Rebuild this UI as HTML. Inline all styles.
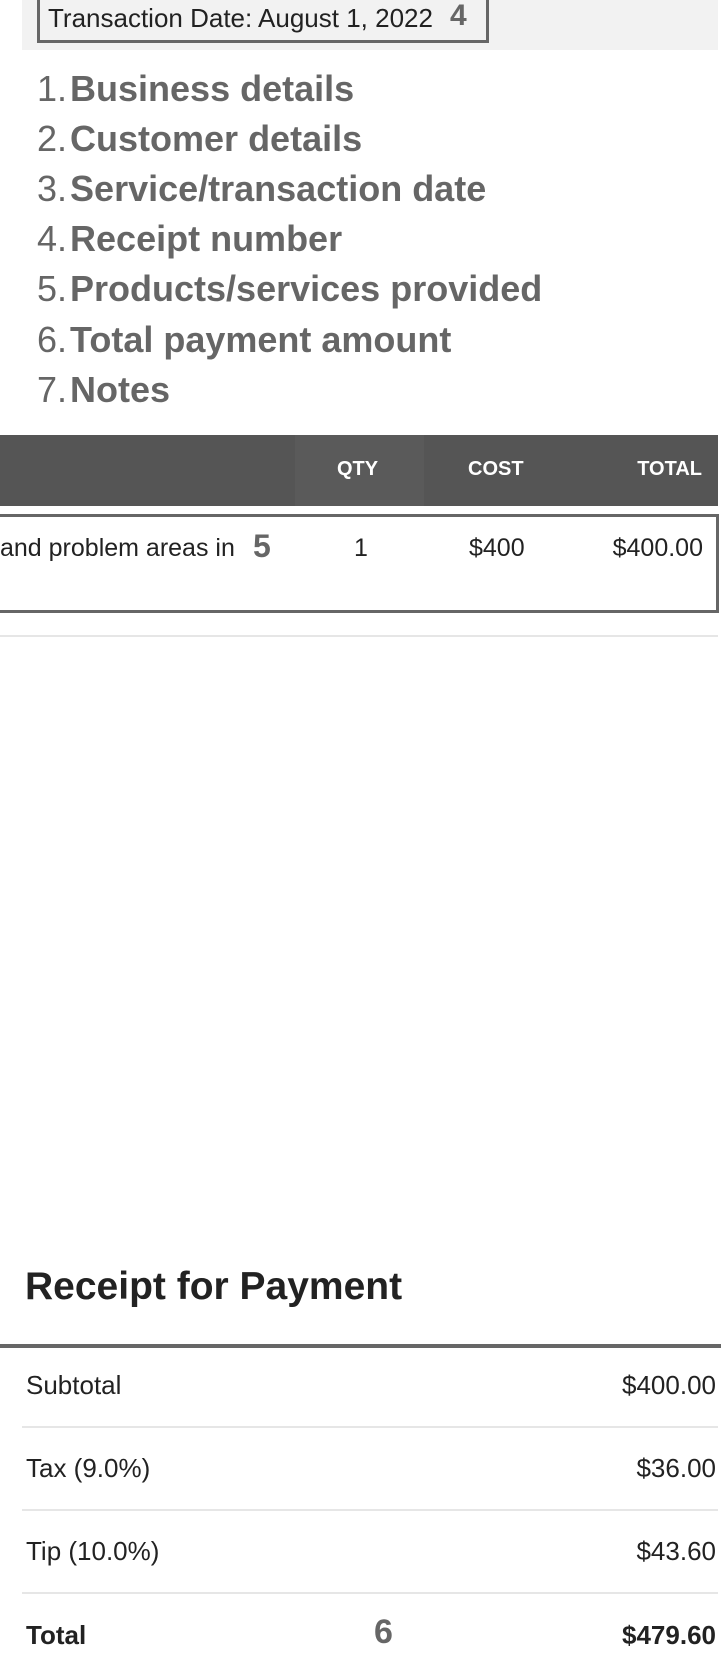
<!DOCTYPE html>
<html><head><meta charset="utf-8"><style>
*{margin:0;padding:0;box-sizing:border-box}
body{width:721px;height:1658px;background:#fff;font-family:"Liberation Sans",sans-serif;position:relative;overflow:hidden;color:#222}
.abs{position:absolute;white-space:nowrap}
.band{position:absolute;left:22px;top:0;width:696px;height:50px;background:#f2f2f2}
.tbox{position:absolute;left:37px;top:-5px;width:452px;height:48px;border:3px solid #666;}
.li{position:absolute;left:37px;font-size:36px;color:#666;line-height:50px;white-space:nowrap}
.li b{margin-left:3px}
.hdr{position:absolute;left:0;top:435px;width:718px;height:71px;background:#555}
.hdr span{position:absolute;top:23px;color:#fff;font-weight:bold;font-size:20px}
.row{position:absolute;left:-10px;top:514px;width:729px;height:99px;border:3px solid #666}
.cell{position:absolute;top:534px;font-size:25px;color:#222;white-space:nowrap}
.line{position:absolute;left:22px;width:696px;height:2px;background:#e6e6e6}
.lab{position:absolute;left:26px;font-size:26px;white-space:nowrap}
.val{position:absolute;right:5px;font-size:26px;white-space:nowrap}
</style></head><body>
<div class="band"></div>
<div class="tbox"></div>
<div class="abs" style="left:48px;top:3px;font-size:26px">Transaction Date: August 1, 2022</div>
<div class="abs" style="left:450px;top:-1px;font-size:30px;font-weight:bold;color:#666">4</div>

<div class="li" style="top:64px">1.<b>Business details</b></div>
<div class="li" style="top:114px">2.<b>Customer details</b></div>
<div class="li" style="top:164px">3.<b>Service/transaction date</b></div>
<div class="li" style="top:214px">4.<b>Receipt number</b></div>
<div class="li" style="top:264px">5.<b>Products/services provided</b></div>
<div class="li" style="top:315px">6.<b>Total payment amount</b></div>
<div class="li" style="top:365px">7.<b>Notes</b></div>

<div class="hdr">
<div style="position:absolute;left:295px;top:0;width:129px;height:71px;background:#5a5a5a"></div>
<span style="left:337px">QTY</span><span style="left:468px">COST</span><span style="right:16px">TOTAL</span></div>
<div class="row"></div>
<div class="cell" style="left:0">and problem areas in</div>
<div class="abs" style="left:253px;top:528px;font-size:32px;font-weight:bold;color:#666">5</div>
<div class="cell" style="left:354px">1</div>
<div class="cell" style="left:469px">$400</div>
<div class="cell" style="right:18px">$400.00</div>
<div class="line" style="left:0;width:718px;top:635px"></div>

<div class="abs" style="left:25px;top:1265px;font-size:39px;font-weight:bold">Receipt for Payment</div>
<div style="position:absolute;left:0;top:1344px;width:721px;height:4px;background:#666"></div>
<div class="lab" style="top:1370px">Subtotal</div><div class="val" style="top:1370px">$400.00</div>
<div class="line" style="top:1426px"></div>
<div class="lab" style="top:1453px">Tax (9.0%)</div><div class="val" style="top:1453px">$36.00</div>
<div class="line" style="top:1509px"></div>
<div class="lab" style="top:1536px">Tip (10.0%)</div><div class="val" style="top:1536px">$43.60</div>
<div class="line" style="top:1592px"></div>
<div class="lab" style="top:1620px;font-weight:bold">Total</div>
<div class="abs" style="left:374px;top:1613px;font-size:34px;font-weight:bold;color:#666">6</div>
<div class="val" style="top:1620px;font-weight:bold">$479.60</div>
</body></html>
